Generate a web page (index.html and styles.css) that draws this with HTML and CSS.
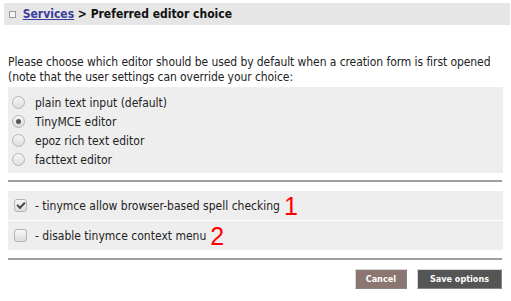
FILE: index.html
```html
<!DOCTYPE html>
<html>
<head>
  <meta charset="UTF-8">
  <title>Preferred editor choice</title>
  <link rel="stylesheet" href="styles.css">
</head>
<body>
  <div class="header">
    <span class="header-icon"></span>
    <a href="#" class="crumb">Services</a> &gt; Preferred editor choice
  </div>

  <form class="prefs">
    <p class="intro">Please choose which editor should be used by default when a creation form is first opened (note that the user settings can override your choice:</p>

    <div class="radio-panel">
      <label class="radio-row"><input type="radio" name="editor"> plain text input (default)</label>
      <label class="radio-row"><input type="radio" name="editor" checked> TinyMCE editor</label>
      <label class="radio-row"><input type="radio" name="editor"> epoz rich text editor</label>
      <label class="radio-row"><input type="radio" name="editor"> facttext editor</label>
    </div>

    <div class="rule"></div>

    <div class="check-list">
      <label class="check-row"><input type="checkbox" checked> - tinymce allow browser-based spell checking <span class="marker">1</span></label>
      <label class="check-row"><input type="checkbox"> - disable tinymce context menu <span class="marker">2</span></label>
    </div>

    <div class="rule"></div>

    <div class="actions">
      <button type="button" class="btn cancel">Cancel</button>
      <button type="button" class="btn save">Save options</button>
    </div>
  </form>
</body>
</html>
```

FILE: styles.css
```css
body {
  margin: 0;
  font-family: "DejaVu Sans Condensed", "DejaVu Sans", Verdana, sans-serif;
  font-size: 12px;
  color: #222;
  background: white;
}

.header {
  margin: 3px 1px 0 4px;
  height: 22px;
  line-height: 22px;
  background: #e6e6e6;
  font-size: 12px;
  font-weight: bold;
  color: #111;
  padding-left: 5px;
}

.header-icon {
  display: inline-block;
  width: 5px;
  height: 5px;
  border: 1px solid #999;
  background: #f4f4f4;
  margin-right: 3px;
}

.crumb {
  color: #3b3b9b;
}

.prefs {
  padding: 0 8px;
}

.intro {
  margin: 30px 0 2px;
  line-height: 15px;
  letter-spacing: -0.08px;
}

.radio-panel {
  background: #eeeeee;
  padding: 6px 0 4px 4px;
}

.radio-row {
  display: flex;
  align-items: center;
  height: 19px;
  gap: 10px;
}

.radio-row input {
  appearance: none;
  margin: 0;
  width: 13px;
  height: 13px;
  border: 1px solid #b4b4b4;
  border-radius: 50%;
  background: linear-gradient(#f6f6f6, #dedede);
  display: grid;
  place-items: center;
}

.radio-row input:checked::after {
  content: "";
  width: 5px;
  height: 5px;
  border-radius: 50%;
  background: #555;
}

.rule {
  height: 2px;
  background: #a0a0a0;
  margin: 7px 1px 0 0;
}

.check-list {
  margin: 9px 0 8px;
}

.check-row {
  display: flex;
  align-items: center;
  height: 29px;
  background: #eeeeee;
  padding-left: 6px;
  gap: 8px;
}

.check-row + .check-row {
  border-top: 1px solid white;
}

.check-row input {
  appearance: none;
  margin: 0;
  width: 13px;
  height: 13px;
  border: 1px solid #b4b4b4;
  border-radius: 3px;
  background: linear-gradient(#f8f8f8, #dcdcdc);
  display: grid;
  place-items: center;
}

.check-row input:checked::after {
  content: "";
  width: 6px;
  height: 3px;
  border-left: 2px solid #444;
  border-bottom: 2px solid #444;
  transform: translateY(-1px) rotate(-45deg);
}

.marker {
  color: #ff0000;
  font-family: "Liberation Sans", Arial, sans-serif;
  font-size: 25px;
  line-height: 20px;
  margin-left: -4px;
}

.actions {
  display: flex;
  justify-content: flex-end;
  gap: 10px;
  margin: 9px 1px 0 0;
}

.btn {
  font-family: "DejaVu Sans Condensed", "DejaVu Sans", Verdana, sans-serif;
  font-size: 9px;
  font-weight: bold;
  color: white;
  height: 20px;
  padding: 0 10px;
  border: 1px solid;
  border-color: #d8d8d8 #888 #888 #d8d8d8;
  cursor: pointer;
}

.cancel {
  background: #8b7672;
}

.save {
  background: #555555;
  padding: 0 12px;
}
```
